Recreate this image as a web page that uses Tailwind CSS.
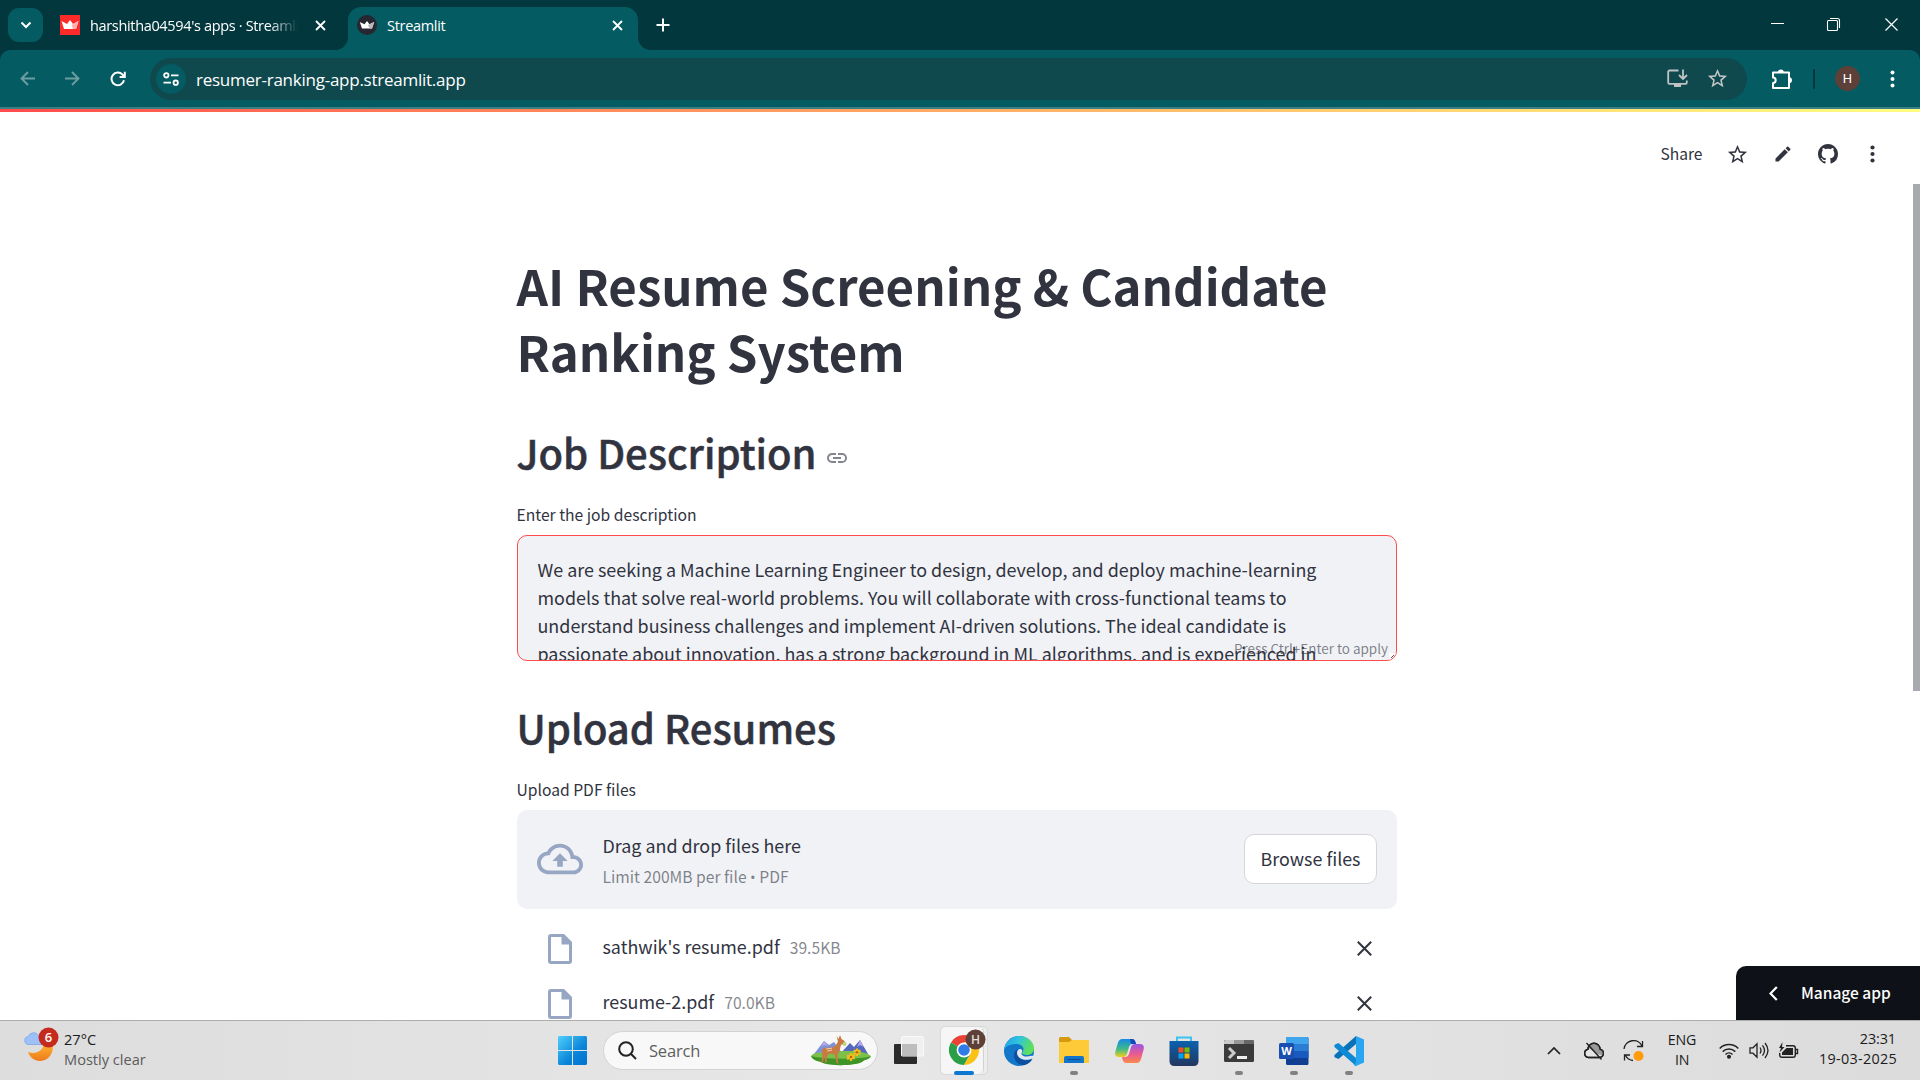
<!DOCTYPE html>
<html lang="en">
<head>
<meta charset="utf-8">
<title>Streamlit</title>
<script src="https://cdn.jsdelivr.net/npm/@tailwindcss/browser@4"></script>
</head>
<body class="w-[1920px] h-[1080px] overflow-hidden bg-white flex flex-col">

<!-- Browser tab strip -->
<div class="h-[50px] shrink-0 bg-[#02373d] flex items-start text-white font-['Open_Sans',sans-serif]">
  <div class="ml-2 mt-2 w-[35px] h-[34px] rounded-[11px] bg-[#045b61] flex items-center justify-center">
    <svg width="12" height="8" viewBox="0 0 12 8" fill="none" stroke="#fff" stroke-width="2"><path d="M1.5 1.5 6 6l4.500-4.500"/></svg>
  </div>
  <div class="ml-[17px] mt-[15px] h-5 w-[268px] flex items-center">
    <svg width="20" height="20" viewBox="0 0 20 20"><rect width="20" height="20" fill="#ff2b2b"/><path d="M1.500 6 7 9l3-4 3 4 5.500-3-2.500 8H4z" fill="#fff"/><path d="M13 9l5.500-3-2.500 8h-3l-1.500-4z" fill="#ffb1b1"/></svg>
    <div class="ml-[10px] pt-px w-[208px] overflow-hidden whitespace-nowrap text-[14.500px] tracking-[-0.34px] leading-5 [mask-image:linear-gradient(to_right,black_86%,transparent)]">harshitha04594's apps · Streamlit</div>
    <svg class="ml-[17px]" width="11" height="11" viewBox="0 0 11 11" stroke="#fff" stroke-width="1.800"><path d="M1 1l9 9M10 1l-9 9"/></svg>
  </div>
  <div class="relative ml-5 mt-[7px] w-[290px] h-[43px] bg-[#045b61] rounded-t-[13px] flex items-center pb-[7px]">
    <svg class="absolute -left-[13px] bottom-0" width="13" height="13"><path d="M13 0v13H0A13 13 0 0 0 13 0z" fill="#045b61"/></svg>
    <svg class="absolute -right-[13px] bottom-0" width="13" height="13"><path d="M0 0v13h13A13 13 0 0 1 0 0z" fill="#045b61"/></svg>
    <svg class="ml-[9px]" width="20" height="20" viewBox="0 0 20 20"><circle cx="10" cy="10" r="10" fill="#262730"/><path d="M2.800 7 7.500 9.300 10 6l2.500 3.300L17.200 7 15 13.500H5z" fill="#fff"/><path d="M12.500 9.300 17.200 7 15 13.500h-2.500L11 10z" fill="#b8b8bd"/></svg>
    <span class="ml-[10px] pt-px text-[14.500px] tracking-[-0.3px] leading-5">Streamlit</span>
    <svg class="ml-auto mr-[15px]" width="11" height="11" viewBox="0 0 11 11" stroke="#fff" stroke-width="1.800"><path d="M1 1l9 9M10 1l-9 9"/></svg>
  </div>
  <svg class="ml-[18px] mt-[18px]" width="14" height="14" viewBox="0 0 14 14" stroke="#fff" stroke-width="2"><path d="M7 .5v13M.5 7h13"/></svg>
  <div class="ml-auto mr-[21px] mt-[17px] flex">
    <svg class="mr-[41px]" width="15" height="15" viewBox="0 0 15 15"><path d="M1 6.500h13" stroke="#fff"/></svg>
    <svg class="mr-[43px]" width="15" height="15" viewBox="0 0 15 15" fill="none" stroke="#fff" stroke-width="1.100"><rect x="1.500" y="3.500" width="10" height="10" rx="1"/><path d="M4 1.500h7.500a2 2 0 0 1 2 2V11"/></svg>
    <svg width="15" height="15" viewBox="0 0 15 15" stroke="#fff" stroke-width="1.200"><path d="M1.500 1.500l12 12M13.500 1.500l-12 12"/></svg>
  </div>
</div>

<!-- Browser toolbar -->
<div class="h-[57px] shrink-0 bg-[#02373d]">
  <div class="h-[57px] bg-[#045b61] rounded-t-[10px] flex items-center text-white">
    <svg class="ml-5" width="15" height="15" viewBox="0 0 15 15" fill="none" stroke="#6c9da1" stroke-width="1.900"><path d="M15 7.500H1.500M8 1 1.500 7.500 8 14"/></svg>
    <svg class="ml-[30px]" width="15" height="15" viewBox="0 0 15 15" fill="none" stroke="#6c9da1" stroke-width="1.900"><path d="M0 7.500h13.500M7 1l6.500 6.500L7 14"/></svg>
    <svg class="ml-[30px]" width="16" height="16" viewBox="0 0 16 16" fill="none" stroke="#fff" stroke-width="2"><path d="M14 9.300A6.300 6.300 0 1 1 12.600 3.700L14.500 5.600M14.800.8V6H9.600"/></svg>
    <div class="ml-[24px] w-[1597px] h-[42px] rounded-full bg-[#0f494e] flex items-center">
      <div class="ml-[6px] w-[30px] h-[30px] rounded-full bg-[#045b61] flex items-center justify-center">
        <svg width="16" height="14" viewBox="0 0 16 14" fill="none" stroke="#fff" stroke-width="1.800"><circle cx="3.300" cy="3.300" r="2.200"/><path d="M8 3.300h7.500M.5 10.700H8"/><circle cx="12.700" cy="10.700" r="2.200"/></svg>
      </div>
      <span class="ml-[10px] pt-[2px] text-[17px] tracking-[-0.25px] leading-6 font-['Open_Sans',sans-serif]">resumer-ranking-app.streamlit.app</span>
      <svg class="ml-auto" width="21" height="19" viewBox="0 0 21 19" fill="none" stroke="#bfc3c4" stroke-width="1.800"><path d="M11.500 1.500H2.500a1.300 1.300 0 0 0-1.300 1.300v10.700a1.300 1.300 0 0 0 1.300 1.300h16a1.300 1.300 0 0 0 1.300-1.300V11.500M16 .5v9M12 6l4 4 4-4"/><path d="M7 14.800h7V18H7z" fill="#bfc3c4" stroke="none"/></svg>
      <svg class="ml-[18px] mr-[18px]" width="23" height="23" viewBox="0 0 24 24" fill="#c4c7c8"><path d="M22 9.240l-7.190-.62L12 2 9.190 8.630 2 9.240l5.460 4.730L5.820 21 12 17.270 18.180 21l-1.630-7.030L22 9.240zM12 15.400l-3.760 2.270 1-4.280-3.320-2.880 4.380-.38L12 6.100l1.710 4.040 4.380.38-3.320 2.880 1 4.280L12 15.400z"/></svg>
    </div>
    <svg class="ml-[24px]" width="22" height="22" viewBox="0 0 22 22" fill="none" stroke="#fff" stroke-width="2"><path d="M2 4.500H18V20H2v-5a2.700 2.700 0 0 0 0-5.400z" stroke-linejoin="round"/><path d="M6.800 4.500a3 3 0 0 1 6 0zM18 9.200a3 3 0 0 1 0 6z" fill="#fff" stroke="none"/></svg>
    <div class="ml-[20px] w-[2px] h-5 bg-[#02373d] rounded"></div>
    <div class="ml-[20px] w-[25px] h-[25px] rounded-full bg-[#5d4037] flex items-center justify-center text-[13px] leading-none font-['Roboto',sans-serif]">H</div>
    <svg class="ml-[30px]" width="5" height="18" viewBox="0 0 5 18" fill="#fff"><circle cx="2.500" cy="2.400" r="2"/><circle cx="2.500" cy="9" r="2"/><circle cx="2.500" cy="15.600" r="2"/></svg>
  </div>
</div>
<div class="h-[2px] shrink-0 bg-[#3b7f84]"></div>
<div class="h-[3px] shrink-0 bg-linear-to-r from-[#ff4b4b] to-[#fffd80]"></div>

<!-- App header -->
<header class="h-[72px] shrink-0 pt-3 flex items-center justify-end text-[#31333f] font-['Noto_Sans_CJK_SC',sans-serif]">
  <span class="text-[15.600px] leading-6 mr-[23.500px] pb-[2px]">Share</span>
  <svg class="mr-[24px]" width="23" height="23" viewBox="0 0 24 24" fill="#31333f"><path d="M22 9.240l-7.190-.62L12 2 9.190 8.630 2 9.240l5.460 4.730L5.820 21 12 17.270 18.180 21l-1.630-7.030L22 9.240zM12 15.400l-3.760 2.270 1-4.280-3.320-2.880 4.380-.38L12 6.100l1.710 4.040 4.380.38-3.320 2.880 1 4.280L12 15.400z"/></svg>
  <svg class="mr-[25px]" width="20" height="20" viewBox="0 0 24 24" fill="#31333f"><path d="M3 17.250V21h3.750L17.810 9.940l-3.750-3.750L3 17.250zM20.710 7.040a1 1 0 0 0 0-1.410l-2.340-2.340a1 1 0 0 0-1.410 0l-1.830 1.830 3.750 3.750 1.830-1.830z"/></svg>
  <svg class="mr-[32px]" width="20" height="20" viewBox="0 0 16 16" fill="#31333f"><path d="M8 0C3.580 0 0 3.580 0 8c0 3.540 2.290 6.530 5.470 7.590.4.070.55-.17.55-.38 0-.19-.01-.82-.01-1.490-2.010.37-2.530-.49-2.690-.94-.09-.23-.48-.94-.82-1.130-.28-.15-.68-.52-.01-.53.63-.01 1.080.58 1.230.82.72 1.210 1.870.87 2.330.66.07-.52.28-.87.51-1.070-1.780-.2-3.640-.89-3.640-3.950 0-.87.31-1.590.82-2.150-.08-.2-.36-1.020.08-2.120 0 0 .67-.21 2.200.82.64-.18 1.320-.27 2-.27s1.360.09 2 .27c1.530-1.040 2.200-.82 2.200-.82.44 1.100.16 1.920.08 2.120.51.56.82 1.270.82 2.150 0 3.070-1.870 3.750-3.650 3.950.29.25.54.73.54 1.480 0 1.070-.01 1.930-.01 2.200 0 .21.15.46.55.38A8.010 8.010 0 0 0 16 8c0-4.420-3.580-8-8-8z"/></svg>
  <svg class="mr-[45px]" width="5" height="18" viewBox="0 0 5 18" fill="#31333f"><circle cx="2.500" cy="2.500" r="2.100"/><circle cx="2.500" cy="9" r="2.100"/><circle cx="2.500" cy="15.500" r="2.100"/></svg>
</header>

<!-- App body -->
<main class="relative h-[836px] shrink-0 overflow-hidden text-[#31333f] font-['Noto_Sans_CJK_SC',sans-serif]">
  <div class="ml-[516.500px] w-[880.500px] pt-[68px] flex flex-col">
    <h1 class="text-[49.160px] leading-[66px] font-bold whitespace-nowrap">AI Resume Screening &amp; Candidate<br>Ranking System</h1>
    <h2 class="mt-[41px] text-[39.980px] leading-[54px] font-medium [-webkit-text-stroke:0.5px_#31333f] flex items-center whitespace-nowrap">Job Description
      <svg class="ml-[8px] mt-[12px]" width="24" height="24" viewBox="0 0 24 24" fill="#83858c"><path d="M3.900 12c0-1.710 1.390-3.100 3.100-3.100h4V7H7a5 5 0 0 0 0 10h4v-1.900H7c-1.710 0-3.100-1.390-3.100-3.100zM8 13h8v-2H8v2zm9-6h-4v1.900h4a3.100 3.100 0 0 1 0 6.200h-4V17h4a5 5 0 0 0 0-10z"/></svg>
    </h2>
    <label class="mt-[23px] text-[15.660px] leading-[25px]">Enter the job description</label>
    <div class="relative mt-2 h-[126px] rounded-[10px] border border-[#ff4b4b] bg-[#f0f2f6] overflow-hidden pl-5 pt-[19px] text-[17.910px] leading-[28px] whitespace-nowrap">
      <div>We are seeking a Machine Learning Engineer to design, develop, and deploy machine-learning</div>
      <div>models that solve real-world problems. You will collaborate with cross-functional teams to</div>
      <div>understand business challenges and implement AI-driven solutions. The ideal candidate is</div>
      <div>passionate about innovation, has a strong background in ML algorithms, and is experienced in</div>
      <div class="absolute right-[8px] bottom-[2px] text-[13.450px] leading-5 text-[#31333f]/60">Press Ctrl+Enter to apply</div>
      <svg class="absolute right-0 bottom-0" width="7" height="7"><path d="M0 0h7v7H0z" fill="#fff"/><path d="M2 5l3-3M4 6l2-2" stroke="#555"/></svg>
    </div>
    <h2 class="mt-[39px] text-[39.980px] leading-[54px] font-medium [-webkit-text-stroke:0.5px_#31333f]">Upload Resumes</h2>
    <label class="mt-[23px] text-[15.660px] leading-[25px]">Upload PDF files</label>
    <div class="mt-2 h-[99px] rounded-[10px] bg-[#f0f2f6] flex items-center pl-5 pr-5 pb-px">
      <svg width="46" height="46" viewBox="0 0 24 24" fill="#97a6c3"><path d="M19.350 10.040C18.670 6.590 15.640 4 12 4 9.110 4 6.600 5.640 5.350 8.040 2.340 8.360 0 10.910 0 14c0 3.310 2.690 6 6 6h13c2.760 0 5-2.240 5-5 0-2.640-2.050-4.780-4.650-4.960zM19 18H6c-2.210 0-4-1.790-4-4s1.790-4 4-4h.71C7.370 7.690 9.480 6 12 6c3.040 0 5.500 2.460 5.500 5.500v.5H19c1.660 0 3 1.340 3 3s-1.340 3-3 3z"/><path d="M8 13h2.550v3h2.900v-3H16l-4-4z"/></svg>
      <div class="ml-5 pt-[2px]">
        <div class="text-[17.900px] leading-[34px]">Drag and drop files here</div>
        <div class="text-[15.660px] leading-[29px] text-[#31333f]/60">Limit 200MB per file <span class="font-['Open_Sans'] text-[15px]">•</span> PDF</div>
      </div>
      <div class="ml-auto w-[133px] h-[50px] rounded-[10px] border border-[#d6d6d9] bg-white flex items-center justify-center pb-[2px] text-[17.900px] leading-6 whitespace-nowrap">Browse files</div>
    </div>
    <div class="mt-3 flex flex-col text-[17.900px]">
      <div class="h-[55px] flex items-center pl-[31px] pr-[25px]">
        <svg width="24" height="30" viewBox="0 0 24 30" fill="#97a6c3"><path fill-rule="evenodd" d="M3 0h13l8 8v19a3 3 0 0 1-3 3H3a3 3 0 0 1-3-3V3a3 3 0 0 1 3-3zm0 3v24h18V10.500h-7.500V3z"/></svg>
        <span class="ml-[31px] leading-[30px] pb-[5px]">sathwik's resume.pdf</span>
        <span class="ml-[10px] text-[15.660px] leading-[30px] pb-[2px] text-[#31333f]/60">39.5KB</span>
        <svg class="ml-auto" width="15" height="15" viewBox="0 0 15 15" stroke="#31333f" stroke-width="2"><path d="M.8.8l13.400 13.400M14.200.8.8 14.200"/></svg>
      </div>
      <div class="h-[55px] flex items-center pl-[31px] pr-[25px]">
        <svg width="24" height="30" viewBox="0 0 24 30" fill="#97a6c3"><path fill-rule="evenodd" d="M3 0h13l8 8v19a3 3 0 0 1-3 3H3a3 3 0 0 1-3-3V3a3 3 0 0 1 3-3zm0 3v24h18V10.500h-7.500V3z"/></svg>
        <span class="ml-[31px] leading-[30px] pb-[5px]">resume-2.pdf</span>
        <span class="ml-[10px] text-[15.660px] leading-[30px] pb-[2px] text-[#31333f]/60">70.0KB</span>
        <svg class="ml-auto" width="15" height="15" viewBox="0 0 15 15" stroke="#31333f" stroke-width="2"><path d="M.8.8l13.400 13.400M14.200.8.8 14.200"/></svg>
      </div>
    </div>
  </div>
  <div class="absolute right-0 top-0 w-[7px] h-[507px] bg-[#a9a9b0]"></div>
  <div class="absolute right-0 bottom-0 w-[184px] h-[54px] rounded-tl-[10px] bg-[#0e1117] text-white flex items-center pl-[33px]">
    <svg width="9" height="15" viewBox="0 0 9 15" fill="none" stroke="#fff" stroke-width="2.200"><path d="M7.800 1 1.500 7.500l6.300 6.500"/></svg>
    <span class="ml-[23px] text-[15.500px] leading-6 font-medium pb-[3px]">Manage app</span>
  </div>
</main>

<!-- Taskbar -->
<footer class="h-[60px] shrink-0 border-t border-[#adadad] bg-linear-to-r from-[#dddddd] via-[#e7e7e7] via-45% to-[#dcdcdc] flex items-center text-[#1b1b1b] font-['Open_Sans',sans-serif]">
  <svg class="ml-6" width="36" height="50" viewBox="24 1026 36 50">
    <defs><linearGradient id="moon" x1="0" y1="0" x2="0" y2="1"><stop offset="0" stop-color="#ffb52e"/><stop offset="1" stop-color="#ee7a1c"/></linearGradient></defs>
    <path d="M29 1044.500a4 4 0 0 1-.5-8 5.500 5.500 0 0 1 10-1l4 9z" fill="#9dc0f7" stroke="#7aa7ec" stroke-width=".8"/>
    <path d="M28 1052c7 2.500 15 0 16-9h8.500c2 9-3.500 18-12.500 18-6 0-10-3.500-12-9z" fill="url(#moon)"/>
    <circle cx="48.500" cy="1037.500" r="10" fill="#c42b1c"/><text x="48.500" y="1042.200" text-anchor="middle" font-size="13" font-weight="600" fill="#fff">6</text>
  </svg>
  <div class="ml-1 w-[490px] pb-[3px] text-[14.600px] leading-5"><div>27°C</div><div class="text-[#5b5b5b]">Mostly clear</div></div>
  <svg class="ml-1" width="29" height="29" viewBox="0 0 29 29"><defs><linearGradient id="win" x1="0" y1="0" x2="1" y2="1"><stop offset="0" stop-color="#4fd0fb"/><stop offset=".6" stop-color="#0a84d9"/><stop offset="1" stop-color="#0071cf"/></linearGradient></defs><path d="M1 0h13v14H0V1zM15 0h13l1 1v13H15zM0 15h14v14H1l-1-1zM15 15h14v13l-1 1H15z" fill="url(#win)"/></svg>
  <div class="ml-[16px] w-[275px] h-[39px] rounded-full bg-[#f8f8f8] border border-[#d3d3d3] flex items-center">
    <svg class="ml-[14px]" width="19" height="19" viewBox="0 0 19 19" fill="none" stroke="#222" stroke-width="2"><circle cx="8" cy="8" r="6.800"/><path d="M12.800 12.800l5.200 5.200"/></svg>
    <span class="ml-[12px] text-[16.500px] tracking-[-0.2px] leading-6 text-[#5f5f5f]">Search</span>
    <svg class="ml-auto mr-[5px]" width="62" height="31" viewBox="0 0 62 31">
      <path d="M4 19 14 6l5 4 5-3 9 12z" fill="#7f92d6"/><path d="M30 19 40 8l4 4 6-7 8 14z" fill="#5468bd"/><path d="M50 5l4 7-4-2-3 2zM14 6l4 5-4-1-3 2z" fill="#b7a9e8"/>
      <path d="M1 21c3-5 14-3 22-4s30-3 38 4c-2 4-6 3-9 6-9 4-30 4-39 1-3-2-10-2-12-7z" fill="#7cc04a"/><path d="M1 21c8 3 50 4 60 0-2 4-6 3-9 6-9 4-30 4-39 1-3-2-10-2-12-7z" fill="#3f9428"/>
      <path d="M26.500 1l2 3 1.500-4 1.500 4 3 2 .5 3-4 .8-1.500 6.200-2 3.500.8 9h-1.600l-2-9-5.700-1-2 3-.3 6h-1.700l-.2-7-2 7h-1.500l1.200-8c-1-2-1-4.500.5-6 4-1.500 9 0 12.500-2.500.8-1.500 1.500-3 2.500-4.500z" fill="#c77a42"/><path d="M16 14l6-.8M17 16l5-.8" stroke="#f2cfa5"/>
      <circle cx="34.500" cy="9" r="2" fill="#b9d77a"/>
      <g fill="none" stroke="#f7bd1f" stroke-width="2.400"><path d="M41 18v8M37 20.500l8 3M37 24l8-4M47 13.500v7.500M43.500 15.500l7 3.500M43.500 19l7-3.500"/></g><g fill="#b8650a"><circle cx="41" cy="22" r="1.300"/><circle cx="47" cy="17.200" r="1.300"/></g>
    </svg>
  </div>
  <svg class="ml-[16px]" width="30" height="30" viewBox="0 0 30 30"><rect y="8" width="23" height="20" rx="1" fill="#2b2b2b"/><rect x="7.500" y=".5" width="22" height="19.500" rx="1" fill="#f0f0f0" stroke="#fafafa"/><path d="M8 8h15v12H8z" fill="#bdbdbd"/></svg>
  <div class="relative ml-[16px] w-[48px] h-[49px] rounded-[5px] bg-[#ededed] border border-[#d9d9d9]">
    <div class="absolute left-0 top-0 w-[43px] h-[47px] rounded-[5px] bg-[#f6f6f6] border-r border-[#d2d2d2]"></div>
    <svg class="absolute left-[8px] top-[2px]" width="38" height="46" viewBox="0 0 38 46">
      <circle cx="15" cy="21" r="15" fill="#fff"/>
      <path d="M15 21 2 13.500A15 15 0 0 1 28 13.500H15z" fill="#ea4335"/><path d="M15 21 2 13.500A15 15 0 0 0 15 36l6.500-11.250z" fill="#2a9f48"/><path d="M15 13.500h13A15 15 0 0 1 15 36l6.500-11.250z" fill="#fbc116"/>
      <circle cx="15" cy="21" r="7.400" fill="#fff"/><circle cx="15" cy="21" r="5.800" fill="#2f7be8"/>
      <circle cx="26.500" cy="10.500" r="10" fill="#5d4037"/><text x="26.500" y="15" text-anchor="middle" font-size="12" font-weight="600" fill="#e6dedb">H</text>
      <rect x="5" y="42" width="20" height="4" rx="2" fill="#0a78d1"/>
    </svg>
  </div>
  <svg class="ml-4" width="30" height="30" viewBox="0 0 30 30"><defs><linearGradient id="ed" x1="0" y1="0" x2="1" y2=".3"><stop offset="0" stop-color="#1f9be6"/><stop offset=".5" stop-color="#2fc3df"/><stop offset="1" stop-color="#5ee05c"/></linearGradient></defs><circle cx="15" cy="15" r="15" fill="#1276c9"/><path d="M0 14C1 5 8 0 15 0c9 0 15 6 15 12.500 0 4-3 6.500-7 6.500-3 0-5-1-5-2s1.500-1.500 1.500-4-3-5-7-5C7 8 1.500 10 0 14z" fill="url(#ed)"/><path d="M10 19c0 6 5 11 11 10 3-1 6-3 7.500-6-6 3-15 1-15.500-6-.2-2 1-3.500 1-3.500-3 .5-4 3-4 5.500z" fill="#0c4f9e"/><path d="M13 17c0-2.500 1.500-3.800 3-4 2.200 0 2.800 2 1.800 3.500-1 2 1 3.700 3.200 3.900 4.200.6 7.800-1 8.400-.4.300.4-.3 1.700-.9 2.300C22 25.500 13.500 23.500 13 17z" fill="#e4e8ec"/></svg>
  <div class="relative ml-[25px] w-[30px] h-[48px] flex items-center"><svg width="30" height="27" viewBox="0 0 30 27"><path d="M0 1.500Q0 0 1.500 0H10l3 3H27v6H0z" fill="#d79a0e"/><path d="M0 5h10l3-2h16q1 0 1 1v22H0z" fill="#ffca38"/><path d="M5 26v-5q0-2 2-2h16q2 0 2 2v5z" fill="#1173ca"/><path d="M8.500 22.500h13" stroke="#0b4f93"/></svg><div class="absolute left-[11px] bottom-0 w-2 h-1 rounded-full bg-[#818181]"></div></div>
  <svg class="ml-[26px]" width="29" height="26" viewBox="0 0 29 26"><defs><linearGradient id="ca" x1="0" y1="0" x2="0" y2="1"><stop offset="0" stop-color="#168be4"/><stop offset=".55" stop-color="#3fb98b"/><stop offset="1" stop-color="#f0cf1a"/></linearGradient><linearGradient id="cb" x1="0" y1="0" x2="0" y2="1"><stop offset="0" stop-color="#9a55e8"/><stop offset=".55" stop-color="#ec5c8c"/><stop offset="1" stop-color="#fb8a4b"/></linearGradient></defs><path d="M7 1h10q3 0 4 5h-4q-2 0-3 3l-2 7q-1 3-4 3H4q-5 0-3.500-6L3 4.500Q4.300 1 7 1z" fill="url(#ca)"/><path d="M15 1h2q3 0 4 5h-5z" fill="#1746c2"/><path d="M22 25H11q-3 0-4-6h4q2 0 3-3l2-7q1-3 4-3h5q5 0 3.500 6L26 21q-1.300 4-4 4z" fill="url(#cb)"/></svg>
  <svg class="ml-[25px]" width="30" height="30" viewBox="0 0 30 30"><defs><linearGradient id="st" x1="0" y1="0" x2="0" y2="1"><stop offset="0" stop-color="#0a62ae"/><stop offset="1" stop-color="#23365f"/></linearGradient></defs><path d="M8 6V1.500h14V6" fill="none" stroke="#3cc2f0" stroke-width="2"/><path d="M.5 5h29v20q0 5-5 5h-19q-5 0-5-5z" fill="url(#st)"/><path d="M9.500 11.500h5v5h-5z" fill="#f25022"/><path d="M15.500 11.500h5v5h-5z" fill="#7fba00"/><path d="M9.500 17.500h5v5h-5z" fill="#00a4ef"/><path d="M15.500 17.500h5v5h-5z" fill="#ffb900"/></svg>
  <div class="relative ml-[25px] w-[30px] h-[48px] flex items-center"><svg width="30" height="22" viewBox="0 0 30 22"><rect width="30" height="22" rx="1.500" fill="#3b3b3b"/><path d="M0 4V1.500Q0 0 1.500 0H10v4z" fill="#c9c9c9"/><path d="M10 0h10v4H10z" fill="#989898"/><path d="M20 0h8.500Q30 0 30 1.500V4H20z" fill="#676767"/><path d="M5 8l5 5-5 5" fill="none" stroke="#ccc" stroke-width="3"/><path d="M13 17.500h10" stroke="#eee" stroke-width="3"/></svg><div class="absolute left-[11px] bottom-0 w-2 h-1 rounded-full bg-[#818181]"></div></div>
  <div class="relative ml-[25px] w-[30px] h-[48px] flex items-center"><svg width="30" height="28" viewBox="0 0 30 28"><rect x="7" width="22.500" height="28" rx="1.500" fill="#103f91"/><path d="M7 14h22.500v7H7z" fill="#185abd"/><path d="M7 7h22.500v7H7z" fill="#2b7cd3"/><path d="M8.500 0H28q1.500 0 1.500 1.500V7H7V1.500Q7 0 8.500 0z" fill="#41a5ee"/><rect y="6" width="15" height="16" rx="1.500" fill="#184fb0"/><text x="7.500" y="18" text-anchor="middle" font-size="11" font-weight="700" fill="#fff">W</text></svg><div class="absolute left-[11px] bottom-0 w-2 h-1 rounded-full bg-[#818181]"></div></div>
  <div class="relative ml-[25px] w-[30px] h-[48px] flex items-center"><svg width="30" height="30" viewBox="0 0 30 30"><path d="M22 0v8L4.500 23 1 21.500q-1.500-1.500 0-3z" fill="#0873b8"/><path d="M22 30v-8L4.500 7 1 8.500q-1.500 1.500 0 3z" fill="#1089d4"/><path d="M22 0l8 3.500v23L22 30q-1.500 0-2.500-1.500L22 27z" fill="#2aa5f2"/></svg><div class="absolute left-[11px] bottom-0 w-2 h-1 rounded-full bg-[#818181]"></div></div>

  <svg class="ml-auto" width="14" height="9" viewBox="0 0 14 9" fill="none" stroke="#222" stroke-width="1.700"><path d="M1 8l6-6 6 6"/></svg>
  <svg class="ml-[22px]" width="22" height="18" viewBox="0 0 22 18" fill="none" stroke="#222" stroke-width="1.400"><path d="M5.500 15.500a4.200 4.200 0 0 1-.5-8.300 6 6 0 0 1 12 0 4.200 4.200 0 0 1-.5 8.300z" fill="#e6e6e6"/><path d="M5.500 6A6 6 0 0 1 17 7.200a4.200 4.200 0 0 1 3 6l-5-1z" fill="#999" stroke="none"/><path d="M5.500 15.500a4.200 4.200 0 0 1-.5-8.300 6 6 0 0 1 12 0 4.200 4.200 0 0 1-.5 8.300zM3.500 1l15 16.500"/></svg>
  <svg class="ml-[18px]" width="22" height="22" viewBox="0 0 22 22" fill="none" stroke="#222" stroke-width="1.300"><path d="M1 9A9.500 9.500 0 0 1 19 6M19.500 1v5.500H14M10 20.500A9.500 9.500 0 0 1 2.500 15.500M1.500 20.500V15H7"/><circle cx="15.500" cy="16" r="5" fill="#ff9b0a" stroke="none"/></svg>
  <div class="ml-[22px] w-[30px] pb-[2px] text-center text-[14.200px] tracking-[-0.2px] leading-5">ENG<br>IN</div>
  <svg class="ml-[22px]" width="20" height="16" viewBox="0 0 20 16" fill="none" stroke="#222" stroke-width="1.500"><path d="M.7 5.500a13 13 0 0 1 18.600 0M3.700 8.600a9 9 0 0 1 12.600 0M6.500 11.500a5 5 0 0 1 7 0"/><circle cx="10" cy="13.800" r="1.300" fill="#222"/></svg>
  <svg class="ml-[10px]" width="20" height="17" viewBox="0 0 20 17" fill="none" stroke="#222" stroke-width="1.300"><path d="M1 5.800h3l4-4v13.400l-4-4H1zM11 5.500q2 3 0 6M13.500 3.300q4 5.200 0 10.400M16 1q6 7.500 0 15"/></svg>
  <svg class="ml-[9px]" width="21" height="17" viewBox="0 0 21 17" fill="none" stroke="#222" stroke-width="1.400"><path d="M8 3.700h7a2.300 2.300 0 0 1 2.300 2.300v7a2.300 2.300 0 0 1-2.300 2.300H4A2.300 2.300 0 0 1 1.700 13v-2M18 7.500h1.500v4H18"/><path d="M8.500 6H15v7H4v-2.500zM4.500 0 1 6h2L1.500 10.500 6.500 5H4z" fill="#222" stroke="none"/></svg>
  <div class="ml-5 mr-[24px] w-[77px] pb-[3px] text-right text-[14.400px] leading-5 whitespace-nowrap"><div class="tracking-[-0.1px]">23:31</div><div class="tracking-[0.3px]">19-03-2025</div></div>
</footer>
</body>
</html>
